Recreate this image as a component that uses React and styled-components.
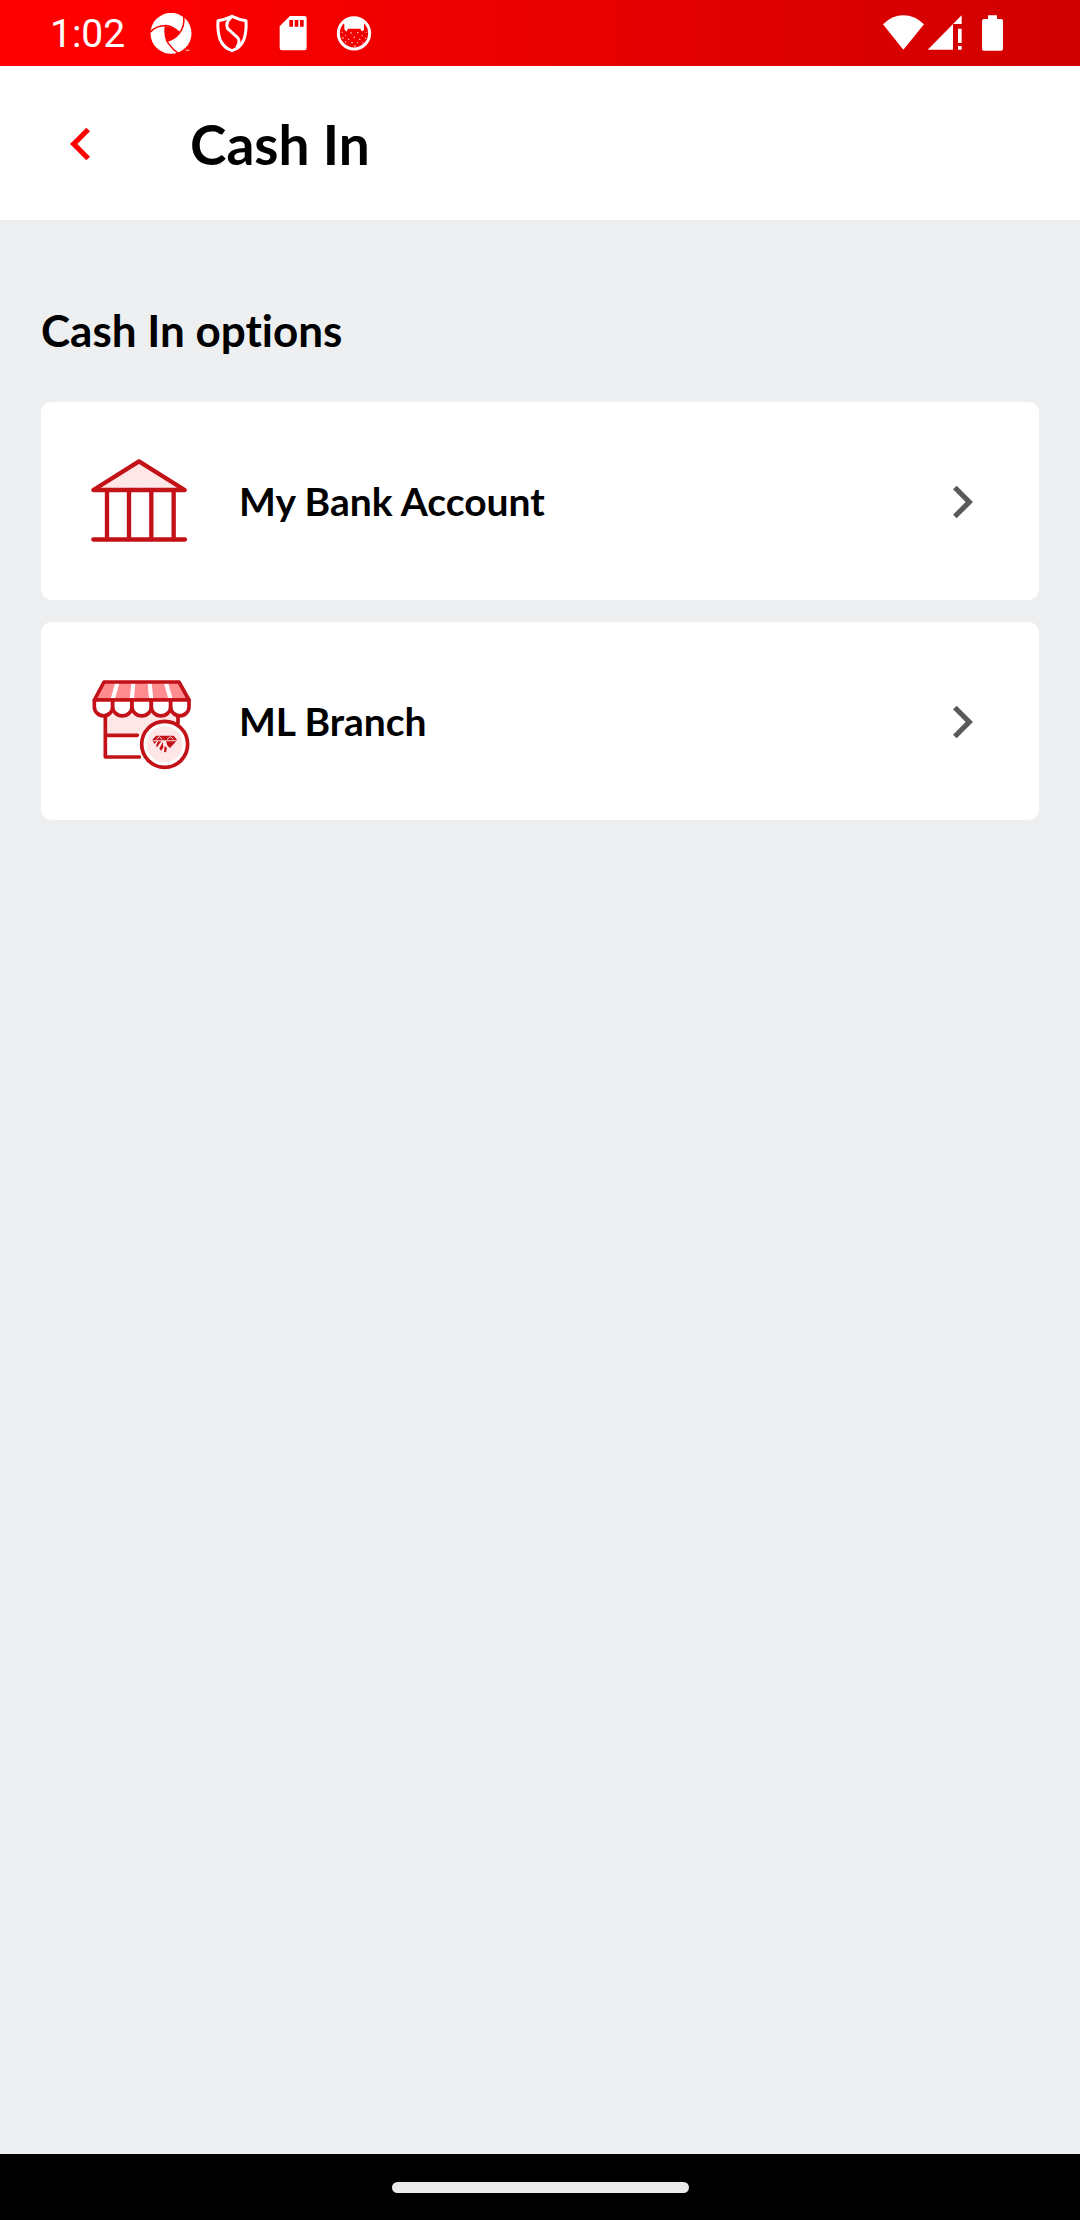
import React from "react";
import styled, { createGlobalStyle } from "styled-components";

const GlobalStyle = createGlobalStyle`
  *, *::before, *::after { box-sizing: border-box; }
  body { margin: 0; background: #eeeff1; }
  button { font: inherit; color: inherit; border: 0; cursor: pointer; }
`;

const Screen = styled.div`
  display: flex;
  flex-direction: column;
  min-height: 100vh;
  background: #eeeff1;
  color: #000;
  font-family: Lato, "Liberation Sans", sans-serif;
  font-weight: 700;
  font-variant-ligatures: none;
`;

const StatusBar = styled.div`
  display: flex;
  align-items: center;
  justify-content: space-between;
  height: 66px;
  padding: 2px 75px 0 50px;
  background: linear-gradient(to right, #ff0000 8%, #d00000);
  color: #fff;
`;

const StatusGroup = styled.div`
  display: flex;
  align-items: center;
  gap: ${({ $gap }) => $gap}px;
`;

const Clock = styled.time`
  width: 81px;
  font-family: Roboto, sans-serif;
  font-size: 39px;
  font-weight: 400;
  line-height: 44px;
`;

const Icon = styled.svg`
  display: block;
  flex: none;
  width: ${({ $w }) => $w}px;
  height: ${({ $h }) => $h}px;
`;

const Header = styled.header`
  display: flex;
  align-items: center;
  height: 154px;
  padding: 2px 40px 0;
  gap: 70px;
  background: #fff;
`;

const BackButton = styled.button`
  display: flex;
  align-items: center;
  justify-content: center;
  width: 80px;
  height: 80px;
  padding: 0;
  background: none;
`;

const Title = styled.h1`
  margin: 0;
  font-size: 55px;
  font-weight: 700;
  line-height: 66px;
`;

const Main = styled.main`
  flex: 1;
  padding: 83px 41px;
`;

const SectionTitle = styled.h2`
  margin: 0 0 45px;
  font-size: 44px;
  font-weight: 700;
  line-height: 54px;
`;

const OptionList = styled.ul`
  display: flex;
  flex-direction: column;
  gap: 22px;
  margin: 0;
  padding: 0;
  list-style: none;
`;

const OptionButton = styled.button`
  display: flex;
  align-items: center;
  gap: 48px;
  width: 100%;
  height: 198px;
  padding: 0 66px 0 50px;
  border-radius: 11px;
  background: #fff;
  text-align: left;
`;

const OptionLabel = styled.span`
  flex: 1;
  font-size: 39px;
  line-height: 48px;
`;

const NavBar = styled.footer`
  display: flex;
  align-items: center;
  justify-content: center;
  height: 66px;
  background: #000;
`;

const HomeHandle = styled.div`
  width: 297px;
  height: 11px;
  border-radius: 6px;
  background: #eaeaea;
`;

const ApertureIcon = () => (
  <Icon $w={42} $h={42} viewBox="451 39 126 126" aria-hidden="true">
    <circle cx="514" cy="100" r="61.5" fill="#fff" />
    <path d="M497 78 Q522 82 540 98 Q526 119 502 124 Q494 100 497 78Z" fill="#fa0000" />
    <g fill="none" stroke="#fa0000" strokeWidth="4.5">
      <path d="M452 97 Q470 75 505 77 Q524 82 540 98" />
      <path d="M552 50 Q556 78 539 100 Q525 118 500 124" />
      <path d="M497 78 Q493 110 506 130 Q520 150 540 163" />
    </g>
    <path d="M557 150h5M559 150v4M564 153v-4l2 3 2-3v4" fill="none" stroke="#fff" strokeWidth="1.5" />
  </Icon>
);

const ShieldIcon = () => (
  <Icon $w={42} $h={42} viewBox="634 39 126 126" aria-hidden="true">
    <g fill="none" stroke="#fff" strokeWidth="9" strokeLinejoin="round">
      <path d="M697 49 Q676 59 655 62 Q653 94 661 118 Q671 143 697 152 Q723 143 733 118 Q741 94 739 62 Q718 59 697 49Z" />
      <path d="M694 52 Q676 68 684 86 L713 112 Q724 124 711 143" />
    </g>
  </Icon>
);

const SdCardIcon = () => (
  <Icon $w={42} $h={42} viewBox="817 39 126 126" aria-hidden="true">
    <path
      fill="#fff"
      fillRule="evenodd"
      d="M871 48H914Q921 48 921 55V144Q921 151 914 151H847Q840 151 840 144V79ZM869 60V80H880V60ZM885 60V80H896V60ZM901 60V80H912V60Z"
    />
  </Icon>
);

const CatIcon = () => (
  <Icon $w={42} $h={42} viewBox="1000 39 126 126" aria-hidden="true">
    <circle cx="1063" cy="100" r="47" fill="none" stroke="#fff" strokeWidth="9" />
    <path
      d="M1030 64 Q1063 40 1096 64 L1093 74 V90 Q1088 96 1083 90 V86 H1045 L1040 95 L1034 88 V74Z"
      fill="#fff"
    />
    <path
      d="M1026 97h3M1052 99h4M1072 98h4M1098 97h3M1036 106h3M1086 107h3M1028 114h4M1062 112h4M1045 118h4M1078 118h4M1096 115h3M1055 128h4M1072 128h3M1036 126h3M1088 128h3M1064 138h4"
      stroke="#fff"
      strokeWidth="4"
      opacity="0.8"
    />
  </Icon>
);

const WifiIcon = () => (
  <Icon $w={42} $h={42} viewBox="66 39 126 126" aria-hidden="true">
    <path d="M130 149 L69 73 Q96 46 130 46 Q165 46 192 73Z" fill="#fff" />
  </Icon>
);

const SignalIcon = () => (
  <Icon $w={51} $h={42} viewBox="201 39 153 126" aria-hidden="true">
    <path d="M203 149 L305 46V72H279V149ZM294 86H305V129H294ZM294 138H305V149H294Z" fill="#fff" />
  </Icon>
);

const BatteryIcon = () => (
  <Icon $w={24} $h={42} viewBox="363 39 72 126" aria-hidden="true">
    <path
      d="M384 46H411V57H423Q429 57 429 63V146Q429 152 423 152H372Q366 152 366 146V63Q366 57 372 57H384Z"
      fill="#fff"
    />
  </Icon>
);

const BackIcon = () => (
  <Icon $w={20} $h={36} viewBox="121 78 60 108" aria-hidden="true">
    <path d="M170 83 L181 94 L143 132 L181 170 L170 181 L121 132Z" fill="#ff0000" />
  </Icon>
);

const ForwardIcon = () => (
  <Icon $w={20} $h={36} viewBox="158 279 60 108" aria-hidden="true">
    <path d="M169 287 L218 336 L169 385 L158 374 L196 336 L158 298Z" fill="#5a5a5a" />
  </Icon>
);

const BankIcon = () => (
  <Icon $w={100} $h={104} viewBox="33 27 300 312" aria-hidden="true">
    <g stroke="#c31118" strokeWidth="13" strokeLinecap="round" strokeLinejoin="round">
      <path d="M40 150 L177 64 L314 150Z" fill="#ffe6e7" />
      <path d="M40 298.500H315" />
      <path d="M81 150V298M147 150V298M214 150V298M281 150V298" />
    </g>
  </Icon>
);

const BranchIcon = () => (
  <Icon $w={100} $h={104} viewBox="33 27 300 312" aria-hidden="true">
    <path d="M76 150H294V226H76Z" fill="#ffe6e7" />
    <path d="M72 67H297L326 120H43Z" fill="#ff8c8e" />
    <path d="M105 70h13l-13 47h-13zM154 70h12l-4 47h-13zM203 70h12l5 47h-13zM252 70h13l13 47h-13z" fill="#fff" />
    <g fill="none" stroke="#c31118" strokeWidth="11" strokeLinecap="round" strokeLinejoin="round">
      <path d="M72 66H297L327 120H43Z" />
      <g fill="#fff">
        <path d="M43 120V140A27.500 27.500 0 0 0 98 140V120Z" />
        <path d="M98 120V140A29 27.500 0 0 0 156 140V120Z" />
        <path d="M156 120V140A29 27.500 0 0 0 214 140V120Z" />
        <path d="M214 120V140A29 27.500 0 0 0 272 140V120Z" />
        <path d="M272 120V140A27.500 27.500 0 0 0 327 140V120Z" />
      </g>
      <path d="M76 170V291H178M76 226H172M294 170V190" />
      <circle cx="254" cy="253" r="69" fill="#fff" />
    </g>
    <circle cx="254" cy="253" r="54" fill="#ffe6e7" />
    <path
      d="M228 227H281L292 241H216ZM218 244H230L224 252ZM234 244H244L231 262L228 257ZM248 246L250 262L244 272L238 266ZM254 258L261 264L258 277L252 276ZM258 244H289L270 264L263 258Z"
      fill="#c31118"
    />
    <path d="M229 238L238 230L247 238M261 238L271 230L280 238" fill="none" stroke="#ffe6e7" strokeWidth="3" />
  </Icon>
);

const options = [
  { label: "My Bank Account", Picture: BankIcon },
  { label: "ML Branch", Picture: BranchIcon },
];

export default function App() {
  return (
    <Screen>
      <GlobalStyle />
      <StatusBar>
        <StatusGroup $gap={19}>
          <Clock>1:02</Clock>
          <ApertureIcon />
          <ShieldIcon />
          <SdCardIcon />
          <CatIcon />
        </StatusGroup>
        <StatusGroup $gap={3}>
          <WifiIcon />
          <SignalIcon />
          <BatteryIcon />
        </StatusGroup>
      </StatusBar>
      <Header>
        <BackButton type="button" aria-label="Back">
          <BackIcon />
        </BackButton>
        <Title>Cash In</Title>
      </Header>
      <Main>
        <SectionTitle>Cash In options</SectionTitle>
        <OptionList>
          {options.map(({ label, Picture }) => (
            <li key={label}>
              <OptionButton type="button">
                <Picture />
                <OptionLabel>{label}</OptionLabel>
                <ForwardIcon />
              </OptionButton>
            </li>
          ))}
        </OptionList>
      </Main>
      <NavBar>
        <HomeHandle />
      </NavBar>
    </Screen>
  );
}
